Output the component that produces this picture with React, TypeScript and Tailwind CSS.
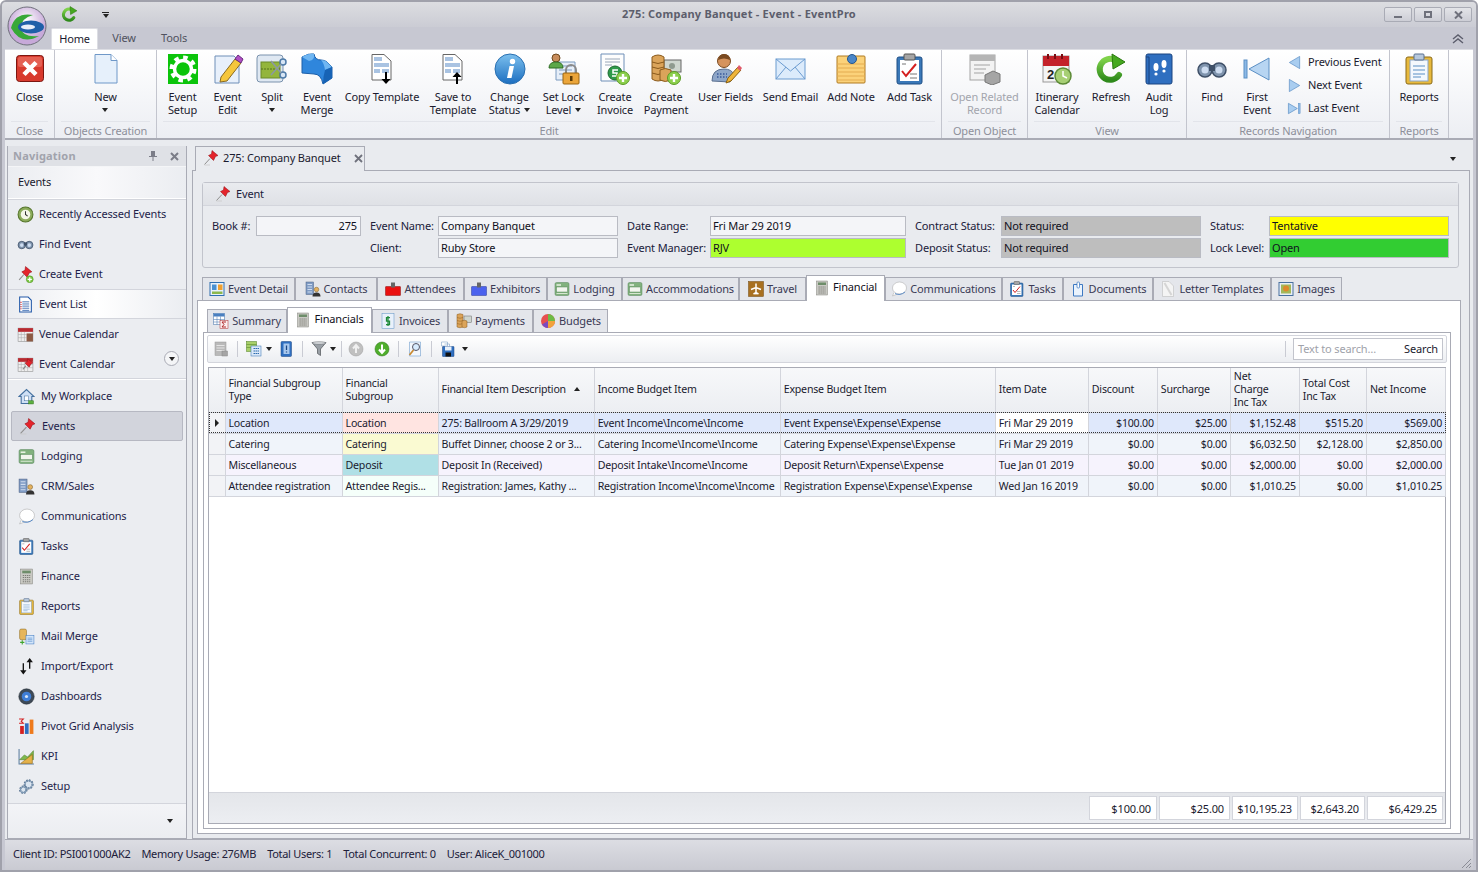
import type { ReactNode } from "react";

type IconName = keyof typeof ICONS;

const g = (d: string, fill: string, stroke = "none", sw = 1) => <path d={d} fill={fill} stroke={stroke} strokeWidth={sw} />;

// all drawn on a 32 unit box
const ICONS = {
  close: <>
    <rect x="2.5" y="2.5" width="27" height="26" rx="3" fill="#d83a2e" stroke="#7c1610" />
    <rect x="4" y="4" width="24" height="10" rx="2" fill="#ee7a6c" opacity=".6" />
    <path d="M10 9.5 L22 21.5 M22 9.5 L10 21.5" stroke="#fff" strokeWidth="4.5" />
  </>,
  newdoc: <>{g("M5 1.5 H21 L27 7.5 V30 H5 Z", "#e6f0fb", "#6f98c8")}{g("M21 1.5 V7.5 H27", "#fff", "#6f98c8")}</>,
  gear: <>
    <rect x="1" y="1" width="30" height="30" fill="#0bc40b" />
    <circle cx="16" cy="16" r="11.5" fill="none" stroke="#fff" strokeWidth="4" strokeDasharray="4.5 4.5" />
    <circle cx="16" cy="16" r="8.5" fill="none" stroke="#fff" strokeWidth="3.5" />
  </>,
  edit: <>
    {g("M3 3 H22 L27 8 V30 H3 Z", "#e8f0fb", "#6f8fb8")}
    {g("M9 24 L23 6 L29 10 L15 28 L8 29 Z", "#f5c63c", "#8a6a20")}
    {g("M23 6 L26 2 L31 6 L29 10 Z", "#b04fc4", "#6a2a80")}
  </>,
  split: <>
    <rect x="1" y="2" width="26" height="27" rx="3" fill="#dfe8f2" stroke="#7a92ad" />
    <rect x="5" y="9" width="19" height="16" fill="#93b53c" stroke="#6a8a28" />
    <path d="M5 16 H24" stroke="#55701c" strokeDasharray="2 1" />
    <circle cx="27" cy="9" r="3" fill="#d8e6f5" stroke="#4f7ba8" strokeWidth="1.5" />
    <circle cx="27" cy="22" r="3" fill="#d8e6f5" stroke="#4f7ba8" strokeWidth="1.5" />
    <path d="M15 8 L25 20 M15 22 L25 11" stroke="#8a97a5" strokeWidth="1.5" />
  </>,
  merge: <>
    {g("M1 4 Q8 0 13 1 Q14 7 20 7 Q24 7 26 9 L31 14 V25 L22 31 Q20 21 13 21 L1 20 Z", "#2f86dc", "#1c5ea8")}
    {g("M1 4 Q8 0 13 1 Q14 7 8 8 Z", "#6fb6f2")}
    {g("M20 7 Q24 7 26 9 L31 14 L24 17 Q23 10 20 7 Z", "#6fb6f2")}
    {g("M24 17 L31 14 V25 L22 31 Q22 24 24 17 Z", "#1763b5")}
  </>,
  tplDown: <>
    {g("M6 1.5 H18 L25 8 V27 H6 Z", "#fff", "#666")}
    <path d="M8 10 H23 V14 H8 Z M8 16 H14 V20 H8 Z M16 16 H23 V20 H16 Z M8 4 H16 V8 H8 Z" fill="#a9c3e2" />
    <path d="M20 19 V28" stroke="#000" strokeWidth="2" />{g("M15.5 26 H24.5 L20 31 Z", "#000")}
  </>,
  tplUp: <>
    {g("M6 1.5 H18 L25 8 V27 H6 Z", "#fff", "#666")}
    <path d="M8 10 H23 V14 H8 Z M8 16 H14 V20 H8 Z M16 16 H23 V20 H16 Z M8 4 H16 V8 H8 Z" fill="#a9c3e2" />
    <path d="M20 22 V31" stroke="#000" strokeWidth="2" />{g("M15.5 24 H24.5 L20 19 Z", "#000")}
  </>,
  info: <>
    <circle cx="16" cy="16" r="15" fill="url(#blueBall)" stroke="#2a6fb0" />
    <path d="M15.5 13 H20 L17.5 25 H13 Z" fill="#fff" />
    <circle cx="18.5" cy="8.5" r="2.7" fill="#fff" />
  </>,
  lock: <>
    {g("M8 9 H27 V27 H8 Z", "#e6eef8", "#7b9abf")}
    <path d="M11 13 H24 M11 17 H24 M11 21 H17" stroke="#7b9abf" />
    <circle cx="8" cy="5" r="4" fill="#c98d5c" stroke="#6f4a20" />
    {g("M1 15 Q1 9 8 9 Q15 9 15 15 Z", "#5ca84a", "#2f6e24")}
    <path d="M18 20 V17 A5 5 0 0 1 28 17 V20" fill="none" stroke="#8a8a8a" strokeWidth="2" />
    <rect x="15" y="20" width="16" height="11" rx="1" fill="#eba53a" stroke="#9a6410" />
    <rect x="22" y="23" width="2.5" height="5" fill="#5c3a05" />
  </>,
  invoice: <>
    {g("M2 1 H25 V28 H2 Z", "#fdfdfd", "#6f8fb8")}
    <path d="M6 6 H21 M6 9 H21 M6 12 H13" stroke="#9aa7b8" />
    <circle cx="16" cy="20" r="7" fill="#2f9a4a" stroke="#1c6a30" />
    <path d="M19 17 H14 V20 H18 V23 H13" fill="none" stroke="#fff" strokeWidth="1.5" />
    <circle cx="24" cy="25" r="6.5" fill="#8ccf4d" stroke="#5b9a25" />
    <path d="M24 21 V29 M20 25 H28" stroke="#fff" strokeWidth="2.4" />
  </>,
  payment: <>
    <rect x="14" y="7" width="17" height="12" fill="#cfd6cf" stroke="#666" />
    <circle cx="22" cy="13" r="3" fill="#8f9a8f" />
    <path d="M2 4 Q8 0 14 4 V26 Q8 30 2 26 Z" fill="#dba45a" stroke="#8a5a1c" />
    <path d="M2 9 Q8 12 14 9 M2 14 Q8 17 14 14 M2 20 Q8 23 14 20" fill="none" stroke="#8a5a1c" />
    <path d="M10 17 Q15 14 21 17 V27 Q15 30 10 27 Z" fill="#dba45a" stroke="#8a5a1c" />
    <circle cx="24" cy="25" r="6.5" fill="#8ccf4d" stroke="#5b9a25" />
    <path d="M24 21 V29 M20 25 H28" stroke="#fff" strokeWidth="2.4" />
  </>,
  user: <>
    <circle cx="14" cy="8" r="6.5" fill="#d5935d" stroke="#7a4a20" />
    {g("M8 7 Q9 1 14 1 Q20 1 20 7 Q14 4 8 7 Z", "#7a4a20")}
    {g("M2 28 Q2 16 14 16 Q22 16 24 22 L20 29 Z", "#8ea6c8", "#5a6f8f")}
    <path d="M7 21 H17 M7 24 H17" stroke="#3a5a9a" strokeWidth="1.5" strokeDasharray="1.5 1.5" />
    {g("M16 30 L18 25 L28 14 L31 17 L21 28 Z", "#efb53a", "#8a6010")}
    {g("M27 15 L29 12 L32 15 L30 18 Z", "#e05a6a")}
  </>,
  mail: <>
    <rect x="1" y="6" width="29" height="20" fill="#dcebfb" stroke="#6b9bd0" />
    <path d="M1 6 L15.5 18 L30 6 M1 26 L11 14 M30 26 L20 14" fill="none" stroke="#6b9bd0" />
  </>,
  note: <>
    <rect x="2" y="3" width="28" height="27" rx="1" fill="#fbd27a" stroke="#b07a20" />
    <path d="M2 11 H30 M2 15 H30 M2 19 H30 M2 23 H30 M2 27 H30" stroke="#e4ac50" />
    <circle cx="17" cy="6" r="4.5" fill="#4a86c8" stroke="#24568f" />
  </>,
  task: <>
    <rect x="3" y="4" width="25" height="27" rx="2" fill="#3a78b8" stroke="#1f4f85" />
    <rect x="6" y="7" width="19" height="21" fill="#fff" />
    <rect x="10" y="1" width="11" height="6" rx="1" fill="#a5a5a5" stroke="#555" />
    <path d="M8 18 L12 23 L22 11" fill="none" stroke="#d42020" strokeWidth="2" />
    <path d="M16 21 H23 M16 25 H23 M8 11 H12" stroke="#777" />
  </>,
  related: <>
    <rect x="1" y="2" width="25" height="25" fill="#f3f3f3" stroke="#a3a3a3" />
    <rect x="1" y="2" width="25" height="6" fill="#b5b5b5" />
    <path d="M5 12 H21 M5 16 H17 M5 20 H15" stroke="#a3a3a3" />
    {g("M16 22 L24 18 L31 21 V29 L23 32 L16 29 Z", "#a5a5a5", "#777")}
  </>,
  itin: <>
    <rect x="2" y="3" width="26" height="26" fill="#f4f4f4" stroke="#999" />
    <rect x="2" y="3" width="26" height="10" fill="#c4222a" />
    <path d="M7 1 V6 M14 1 V6 M21 1 V6" stroke="#7a0d12" strokeWidth="2" />
    <text x="6" y="26" fontSize="13" fontWeight="700" fontFamily="Liberation Sans" fill="#222">2</text>
    <circle cx="22" cy="23" r="8" fill="#a7cf75" stroke="#5c8a36" strokeWidth="1.5" />
    <path d="M22 18 V23 L26 25" fill="none" stroke="#fff" strokeWidth="1.5" />
  </>,
  refresh: <>
    <path d="M24 22 A10.5 10.5 0 1 1 20 7" fill="none" stroke="url(#greenArc)" strokeWidth="6" strokeLinecap="round" />
    {g("M17 1 L30 9 L18 16 Z", "#46a81f", "#2c7a10")}
  </>,
  audit: <>
    <rect x="3" y="1" width="26" height="30" rx="2" fill="#2f6fc0" stroke="#1a4480" />
    <path d="M3 4 H6 V31" stroke="#1a4480" fill="none" />
    <ellipse cx="13" cy="14" rx="2.5" ry="4" fill="#fff" />
    <ellipse cx="21" cy="11" rx="2.5" ry="4" fill="#fff" />
    <circle cx="13" cy="21" r="1.6" fill="#fff" /><circle cx="21" cy="18" r="1.6" fill="#fff" />
  </>,
  binoc: <>
    <circle cx="9" cy="17" r="7" fill="#7f94ad" stroke="#3f5068" strokeWidth="1.5" />
    <circle cx="23" cy="17" r="7" fill="#7f94ad" stroke="#3f5068" strokeWidth="1.5" />
    <circle cx="9" cy="17" r="3.5" fill="#cddcf0" /><circle cx="23" cy="17" r="3.5" fill="#cddcf0" />
    <rect x="13" y="12" width="6" height="6" fill="#3f5068" />
  </>,
  first: <>
    <rect x="3" y="7" width="3" height="18" fill="#8db9e6" stroke="#5b8fc4" />
    {g("M28 5 V27 L8 16 Z", "#b7d5f2", "#5b8fc4")}
  </>,
  prev: <>{g("M27 3 V29 L5 16 Z", "#a9cdf0", "#5b8fc4", 1.5)}</>,
  next: <>{g("M5 3 V29 L27 16 Z", "#a9cdf0", "#5b8fc4", 1.5)}</>,
  last: <>
    {g("M3 5 V27 L22 16 Z", "#a9cdf0", "#5b8fc4", 1.5)}
    <rect x="24" y="5" width="4" height="22" fill="#8db9e6" stroke="#5b8fc4" />
  </>,
  report: <>
    <rect x="3" y="4" width="26" height="27" rx="2" fill="#e8b93c" stroke="#8a6a18" />
    <rect x="7" y="7" width="18" height="21" fill="#f4f8fd" stroke="#8aa6c8" />
    <rect x="11" y="1" width="10" height="6" rx="1" fill="#b7c8dc" stroke="#5a7090" />
    <path d="M10 13 H22 M10 17 H22 M10 21 H22 M10 24 H18" stroke="#5b8fc4" />
  </>,
  clock: <>
    <circle cx="16" cy="16" r="14" fill="#8bab5a" stroke="#55752c" strokeWidth="2" />
    <circle cx="16" cy="16" r="9" fill="#f4f6e8" />
    <path d="M16 10 V16 L20 19" fill="none" stroke="#333" strokeWidth="2" />
  </>,
  pin: <>
    {g("M18 1 L30 11 L25 13 L21 21 L11 11 L17 8 Z", "#e4242c", "#8f1016")}
    <path d="M14 17 L3 29" stroke="#8f8f8f" strokeWidth="2" />
    <path d="M3 30 H14" stroke="#c9c9c9" strokeWidth="1.5" />
  </>,
  pinAdd: <>
    {g("M16 1 L28 11 L23 13 L19 21 L9 11 L15 8 Z", "#e4242c", "#8f1016")}
    <path d="M13 16 L4 26" stroke="#8f8f8f" strokeWidth="2" />
    <circle cx="24" cy="25" r="6.5" fill="#7cc944" stroke="#4f8f20" />
    <path d="M24 21 V29 M20 25 H28" stroke="#fff" strokeWidth="2.4" />
  </>,
  list: <>
    <path d="M5 2 H21 L27 8 V30 H5 Z" fill="#fff" stroke="#2258a8" strokeWidth="2" />
    <path d="M10 11 H23 M10 15 H23 M10 19 H23 M10 23 H23 M10 27 H23" stroke="#2258a8" strokeWidth="1.5" />
    <path d="M7.5 11 V27" stroke="#d42020" strokeWidth="2" strokeDasharray="2 2" />
  </>,
  venueCal: <>
    <rect x="2" y="4" width="28" height="25" fill="#eee" stroke="#888" />
    <rect x="2" y="4" width="28" height="7" fill="#b82a30" />
    <path d="M2 16 H18 M2 22 H18 M8 11 V29 M14 11 V29" stroke="#aaa" />
    <rect x="18" y="14" width="12" height="15" fill="#8c5a44" />
  </>,
  eventCal: <>
    <rect x="2" y="4" width="28" height="25" fill="#eee" stroke="#888" />
    <rect x="2" y="4" width="28" height="7" fill="#b82a30" />
    <path d="M2 16 H30 M2 22 H30 M8 11 V29 M14 11 V29 M20 11 V29" stroke="#aaa" />
    {g("M20 5 L30 13 L26 15 L23 21 L15 13 L19 11 Z", "#e4242c", "#8f1016")}
    <path d="M17 18 L11 25" stroke="#888" strokeWidth="2" />
  </>,
  home: <>
    {g("M2 16 L16 3 L30 16 L26 16 V29 H6 V16 Z", "#cfe0f5", "#44709f", 2)}
    <rect x="12" y="15" width="8" height="9" fill="#fff" stroke="#44709f" />
    <rect x="20" y="24" width="9" height="6" fill="#5cb040" stroke="#3a7a24" />
  </>,
  lodging: <>
    <rect x="2" y="3" width="28" height="26" rx="3" fill="#82b27e" stroke="#55855a" />
    <rect x="5" y="12" width="22" height="10" fill="#f2f6ee" stroke="#55855a" />
    <path d="M5 8 H14" stroke="#e9f2e4" strokeWidth="3" />
    <path d="M5 25 H27" stroke="#d6e6d0" strokeWidth="2" />
  </>,
  crm: <>
    <rect x="2" y="2" width="15" height="25" fill="#7f9bc4" stroke="#4a5f80" />
    <path d="M5 7 H14 M5 12 H14 M5 17 H14 M5 22 H14" stroke="#cfdcee" strokeWidth="2" />
    <circle cx="23" cy="17" r="4.5" fill="#e3b15f" stroke="#7a5a20" />
    {g("M15 31 Q15 23 23 23 Q31 23 31 31 Z", "#333")}
  </>,
  bubble: <>
    <ellipse cx="17" cy="14" rx="14" ry="12" fill="#fff" stroke="#a5a5a5" />
    <path d="M6 23 L3 30 L13 26" fill="#fff" stroke="#a5a5a5" />
    <path d="M8 25 Q18 30 28 22" fill="none" stroke="#3d79c2" strokeWidth="1.6" />
  </>,
  calc: <>
    <rect x="5" y="2" width="22" height="28" fill="#c9c9c3" stroke="#82827c" />
    <rect x="8" y="5" width="16" height="5" fill="#6e8d6a" />
    <path d="M9 14 H23 M9 18 H23 M9 22 H23 M9 26 H23" stroke="#7a7a74" strokeWidth="2" strokeDasharray="2.5 1.5" />
  </>,
  merge2: <>
    <rect x="3" y="2" width="13" height="20" rx="3" fill="#e6b65c" stroke="#8a6a20" />
    <rect x="15" y="14" width="15" height="16" fill="#d4e6fa" stroke="#3d79c2" />
    <path d="M18 19 H27 M18 22 H27 M18 25 H27" stroke="#3d79c2" />
    <path d="M4 27 H12 M8 23 V31" stroke="#3fa52f" strokeWidth="2" />
  </>,
  impexp: <>
    <path d="M10 10 V27 M22 3 V20" stroke="#111" strokeWidth="2.5" />
    {g("M4 23 H16 L10 31 Z", "#111")}{g("M16 8 H28 L22 0 Z", "#111")}
  </>,
  dash: <>
    <circle cx="16" cy="16" r="14.5" fill="#3e4a57" stroke="#20282f" />
    <circle cx="16" cy="16" r="9" fill="#3f7ed6" />
    <circle cx="16" cy="16" r="3" fill="#d7e6f8" />
  </>,
  pivot: <>
    <path d="M2 2 H10 L6 6 L10 10 H2" fill="none" stroke="#d42020" strokeWidth="2" />
    <rect x="4" y="15" width="7" height="15" fill="#d42020" />
    <rect x="13" y="10" width="7" height="20" fill="#2f6fc0" />
    <rect x="22" y="3" width="7" height="27" fill="#ee7a1c" />
  </>,
  kpi: <>
    <path d="M2 2 V30 H30" fill="none" stroke="#5f7f9f" strokeWidth="2" />
    {g("M3 22 L12 13 L18 17 L29 5 V22 Z", "#7eb84c", "#4a7a24")}
    {g("M5 29 L27 12 V29 Z", "#e5b24a", "#8a6010")}
  </>,
  setup: <>
    <circle cx="20" cy="12" r="7.5" fill="#dbe5f0" stroke="#56718f" strokeWidth="4" strokeDasharray="3 2" />
    <circle cx="20" cy="12" r="7" fill="none" stroke="#7f9ab5" strokeWidth="2" />
    <circle cx="10" cy="22" r="6" fill="#dbe5f0" stroke="#56718f" strokeWidth="4" strokeDasharray="3 2" />
    <circle cx="10" cy="22" r="5.5" fill="none" stroke="#7f9ab5" strokeWidth="2" />
  </>,
  summary: <>
    <rect x="1" y="1" width="22" height="22" fill="#fff" stroke="#3d6fa8" />
    <rect x="1" y="1" width="22" height="6" fill="#4a80c0" />
    <path d="M1 13 H23 M1 18 H23 M8 7 V23 M15 7 V23" stroke="#3d6fa8" />
    <rect x="14" y="15" width="16" height="16" fill="#fbeeee" stroke="#b02a2a" />
    <path d="M26 18 H18 L22 23 L18 28 H26" fill="none" stroke="#b02a2a" strokeWidth="2" />
  </>,
  invoiceTab: <>
    <rect x="4" y="1" width="24" height="30" fill="#e9f1fb" stroke="#5b8fc4" />
    <path d="M20 9 H13 V16 H19 V23 H12 M16 6 V26" fill="none" stroke="#1f8a3a" strokeWidth="2.5" />
  </>,
  coins: <>
    <rect x="16" y="6" width="15" height="13" fill="#cfd6cf" stroke="#666" />
    <path d="M2 3 Q8 0 14 3 V28 Q8 31 2 28 Z" fill="#dba45a" stroke="#8a5a1c" />
    <path d="M2 9 Q8 12 14 9 M2 15 Q8 18 14 15 M2 21 Q8 24 14 21" fill="none" stroke="#8a5a1c" />
    <path d="M12 16 Q17 13 22 16 V28 Q17 31 12 28 Z" fill="#dba45a" stroke="#8a5a1c" />
  </>,
  budgets: <>
    <circle cx="16" cy="16" r="14" fill="#e55050" />
    <path d="M16 16 L16 2 A14 14 0 0 1 30 16 Z" fill="#6dbb45" />
    <path d="M16 16 L30 16 A14 14 0 0 1 16 30 Z" fill="#f2a33a" />
    <path d="M16 16 L16 30 A14 14 0 0 1 4 23 Z" fill="#7a4bc0" />
  </>,
  detail: <>
    <rect x="2" y="3" width="28" height="26" fill="#e8f1fa" stroke="#2f6fb0" strokeWidth="2" />
    <rect x="6" y="7" width="9" height="11" fill="#4a90d0" />
    <rect x="18" y="7" width="9" height="11" fill="#f0a030" />
    <rect x="6" y="21" width="21" height="5" fill="#8cb84c" />
  </>,
  attendees: <>
    <rect x="1" y="11" width="30" height="18" rx="1" fill="#ea1010" stroke="#8a1010" />
    <rect x="12" y="3" width="8" height="10" fill="#666" />
  </>,
  exhibitors: <>
    <rect x="1" y="11" width="30" height="18" rx="1" fill="#4b62ee" stroke="#2a3a9a" />
    <rect x="12" y="3" width="8" height="10" fill="#666" />
  </>,
  travel: <>
    <rect x="1" y="1" width="30" height="30" fill="#a87020" stroke="#704810" />
    <path d="M16 5 V27 M6 17 L16 13 L26 17 M11 26 L16 23 L21 26" fill="none" stroke="#fff" strokeWidth="3" />
  </>,
  docs: <>
    {g("M7 7 H25 V30 H7 Z", "#eaf3fd", "#3d79c2", 2)}
    <rect x="14" y="2" width="5" height="12" rx="2" fill="#fff" stroke="#3d79c2" strokeWidth="1.5" />
  </>,
  letter: <>{g("M5 1 H18 L27 10 V31 H5 Z", "#f4f4f4", "#b5b5b5")}{g("M9 4 L23 28", "none", "#d5d5d5", 4)}</>,
  images: <>
    <rect x="2" y="3" width="28" height="26" fill="#e9eff7" stroke="#48709f" strokeWidth="2" />
    <rect x="6" y="7" width="20" height="18" fill="#a3b85a" />
    <circle cx="16" cy="15" r="6" fill="#dd8a2c" />
  </>,
  grid1: <>
    <rect x="4" y="2" width="22" height="27" fill="#b9b9b9" stroke="#999" />
    <path d="M7 9 H23 M7 14 H23 M7 19 H23" stroke="#e4e4e4" strokeWidth="2" />
    <rect x="18" y="20" width="11" height="10" fill="#a5a5a5" stroke="#888" />
  </>,
  columns: <>
    <rect x="1" y="1" width="20" height="20" fill="#a8cf68" stroke="#4f7f20" />
    <path d="M1 7 H21 M1 13 H21" stroke="#4f7f20" />
    <rect x="10" y="10" width="20" height="20" fill="#dbe8f8" stroke="#2f6fb0" />
    <path d="M15 15 H26 M15 20 H26 M15 25 H26" stroke="#2f6fb0" strokeWidth="2" strokeDasharray="3 1" />
  </>,
  bookmark: <>
    <rect x="6" y="1" width="21" height="30" rx="2" fill="#2f6fc0" stroke="#1a4480" />
    <rect x="11" y="5" width="12" height="21" fill="#a8c8ee" />
    <path d="M17 9 V18 M17 21 V23" stroke="#1a4480" strokeWidth="2.5" />
  </>,
  funnel: <>
    {g("M2 3 H30 L19 16 V29 L13 25 V16 Z", "#9aa0a6", "#55595e", 1.5)}
    <ellipse cx="16" cy="4" rx="14" ry="2.5" fill="#dfe2e5" stroke="#55595e" />
  </>,
  up: <>
    <circle cx="16" cy="16" r="14" fill="#c0c0c0" stroke="#9a9a9a" />
    <path d="M16 24 V10 M10 15 L16 8 L22 15" fill="none" stroke="#f0f0f0" strokeWidth="4" />
  </>,
  down: <>
    <circle cx="16" cy="16" r="14" fill="#4fae2c" stroke="#2a6f14" />
    <path d="M16 7 V22 M10 17 L16 24 L22 17" fill="none" stroke="#fff" strokeWidth="4" />
  </>,
  preview: <>
    {g("M5 2 H27 V30 H5 Z", "#f2f7fd", "#5b8fc4")}
    <circle cx="18" cy="12" r="7" fill="#d8ecff" stroke="#556" strokeWidth="2" />
    <path d="M13 18 L5 28" stroke="#c98a30" strokeWidth="3.5" />
  </>,
  save: <>
    <path d="M3 2 H15 V10 H3 Z M9 6 H19 V14" fill="#fff" stroke="#6a90bd" />
    <rect x="5" y="11" width="23" height="20" rx="1" fill="#2f6fc0" stroke="#1a4480" />
    <rect x="10" y="11" width="13" height="8" fill="#e8f0fa" />
    <rect x="11" y="23" width="11" height="8" fill="#111" />
  </>,
};

function Icon({ name, size = 32 }: { name: IconName; size?: number }) {
  return (
    <svg width={size} height={size} viewBox="0 0 32 32" className="shrink-0">
      {ICONS[name]}
    </svg>
  );
}

const Caret = ({ className = "" }: { className?: string }) => (
  <span className={`inline-block w-0 h-0 border-l-[3.5px] border-r-[3.5px] border-t-[4px] border-l-transparent border-r-transparent border-t-[#222] ${className}`} />
);

type RibbonBtn = { lines: string[]; icon: IconName; w: number; caret?: "below" | "inline"; disabled?: boolean };

const EDIT_BUTTONS: RibbonBtn[] = [
  { lines: ["Event", "Setup"], icon: "gear", w: 46 },
  { lines: ["Event", "Edit"], icon: "edit", w: 44 },
  { lines: ["Split"], icon: "split", w: 45, caret: "below" },
  { lines: ["Event", "Merge"], icon: "merge", w: 45 },
  { lines: ["Copy Template"], icon: "tplDown", w: 85 },
  { lines: ["Save to", "Template"], icon: "tplUp", w: 57 },
  { lines: ["Change", "Status"], icon: "info", w: 56, caret: "inline" },
  { lines: ["Set Lock", "Level"], icon: "lock", w: 52, caret: "inline" },
  { lines: ["Create", "Invoice"], icon: "invoice", w: 51 },
  { lines: ["Create", "Payment"], icon: "payment", w: 51 },
  { lines: ["User Fields"], icon: "user", w: 68 },
  { lines: ["Send Email"], icon: "mail", w: 62 },
  { lines: ["Add Note"], icon: "note", w: 59 },
  { lines: ["Add Task"], icon: "task", w: 58 },
];

function RibbonButton({ b }: { b: RibbonBtn }) {
  return (
    <div className="flex flex-col items-center shrink-0" style={{ width: b.w }}>
      <div className="h-[32px] mt-[3px] mb-[5px] flex items-center justify-center"><Icon name={b.icon} /></div>
      <div className={`text-center leading-[13px] whitespace-nowrap ${b.disabled ? "text-[#a3a5ad]" : "text-[#1a1a2e]"}`}>
        {b.lines.map((l, i) => (
          <div key={l}>
            {l}
            {b.caret === "inline" && i === 1 && <Caret className="ml-[4px] mb-[2px]" />}
          </div>
        ))}
        {b.caret === "below" && <div className="leading-[10px]"><Caret /></div>}
      </div>
    </div>
  );
}

function RibbonGroup({ caption, width, inner = "justify-center", children }: { caption: string; width: number; inner?: string; children: ReactNode }) {
  return (
    <div className="flex flex-col shrink-0 border-r border-[#c3c5ce] h-full" style={{ width }}>
      <div className={`h-[71px] shrink-0 flex ${inner}`}>{children}</div>
      <div className="mx-[6px] h-[17px] shrink-0 border-t border-[#e2e4ea] text-center text-[#8d8f9a] leading-[18px]">{caption}</div>
    </div>
  );
}

function Ribbon() {
  return (
    <div className="h-[91px] mx-[3px] flex bg-gradient-to-b from-white to-[#eceef3] border-b-2 border-[#a9abb5] border-t border-t-[#dcdde3] text-[#1a1a2e]">
      <RibbonGroup caption="Close" width={50}>
        <RibbonButton b={{ lines: ["Close"], icon: "close", w: 46 }} />
      </RibbonGroup>
      <RibbonGroup caption="Objects Creation" width={102}>
        <RibbonButton b={{ lines: ["New"], icon: "newdoc", w: 100, caret: "below" }} />
      </RibbonGroup>
      <RibbonGroup caption="Edit" width={785}>
        {EDIT_BUTTONS.map((b) => <RibbonButton key={b.lines.join(" ")} b={b} />)}
      </RibbonGroup>
      <RibbonGroup caption="Open Object" width={86}>
        <RibbonButton b={{ lines: ["Open Related", "Record"], icon: "related", w: 82, disabled: true }} />
      </RibbonGroup>
      <RibbonGroup caption="View" width={159} inner="justify-start">
        <RibbonButton b={{ lines: ["Itinerary", "Calendar"], icon: "itin", w: 58 }} />
        <RibbonButton b={{ lines: ["Refresh"], icon: "refresh", w: 50 }} />
        <RibbonButton b={{ lines: ["Audit", "Log"], icon: "audit", w: 46 }} />
      </RibbonGroup>
      <RibbonGroup caption="Records Navigation" width={203} inner="justify-start pl-[2px]">
        <RibbonButton b={{ lines: ["Find"], icon: "binoc", w: 46 }} />
        <RibbonButton b={{ lines: ["First", "Event"], icon: "first", w: 44 }} />
        <div className="flex flex-col gap-[7px] pt-[4px] pl-[8px] w-[104px] shrink-0">
          {([["prev", "Previous Event"], ["next", "Next Event"], ["last", "Last Event"]] as [IconName, string][]).map(([ic, t]) => (
            <div key={t} className="flex items-center gap-[6px] h-[16px]"><Icon name={ic} size={15} /><span className="whitespace-nowrap">{t}</span></div>
          ))}
        </div>
      </RibbonGroup>
      <RibbonGroup caption="Reports" width={59}>
        <RibbonButton b={{ lines: ["Reports"], icon: "report", w: 56 }} />
      </RibbonGroup>
    </div>
  );
}

const NAV_TOP: [IconName, string][] = [
  ["clock", "Recently Accessed Events"],
  ["binoc", "Find Event"],
  ["pinAdd", "Create Event"],
  ["list", "Event List"],
  ["venueCal", "Venue Calendar"],
  ["eventCal", "Event Calendar"],
];

const NAV_MAIN: [IconName, string][] = [
  ["home", "My Workplace"],
  ["pin", "Events"],
  ["lodging", "Lodging"],
  ["crm", "CRM/Sales"],
  ["bubble", "Communications"],
  ["task", "Tasks"],
  ["calc", "Finance"],
  ["report", "Reports"],
  ["merge2", "Mail Merge"],
  ["impexp", "Import/Export"],
  ["dash", "Dashboards"],
  ["pivot", "Pivot Grid Analysis"],
  ["kpi", "KPI"],
  ["setup", "Setup"],
];

function Sidebar() {
  return (
    <div className="w-[180px] shrink-0 flex flex-col border border-[#a9abb5] border-t-0 bg-[#ebedf1] text-[#1e1e4a]">
      <div className="h-[21px] flex items-center justify-between pl-[5px] pr-[7px] bg-[#dfe1e6] border-b border-[#f4f5f7]">
        <span className="font-bold text-[#a1a3ac] tracking-[0.2px]">Navigation</span>
        <span className="flex items-center gap-[13px] text-[#7b7d88]">
          <svg width="8" height="10" viewBox="0 0 8 10"><path d="M2 0 H6 V5 H8 V6 H4.5 V10 H3.5 V6 H0 V5 H2 Z" fill="#7b7d88" /></svg>
          <svg width="9" height="9" viewBox="0 0 9 9"><path d="M1 1 L8 8 M8 1 L1 8" stroke="#7b7d88" strokeWidth="2" /></svg>
        </span>
      </div>
      <div className="h-[32px] flex items-center pl-[10px] bg-gradient-to-r from-[#ebedf1] via-[#f9f9fb] to-[#ebedf1] border-b border-b-white shadow-[0_1px_0_#d3d5dc] text-[#1a1a2e]">Events</div>
      <div className="flex flex-col">
        {NAV_TOP.map(([ic, t]) => (
          <div key={t} className={`h-[30px] flex items-center gap-[5px] pl-[9px] relative ${t === "Event List" ? "bg-gradient-to-r from-[#ebedf1] via-white to-[#ebedf1] border-y border-[#d3d5dc]" : ""}`}>
            <Icon name={ic} size={17} />
            <span>{t}</span>
            {t === "Event Calendar" && (
              <span className="absolute right-[7px] top-[2px] w-[15px] h-[15px] rounded-full border border-[#a9abb5] bg-[#f4f5f7] flex items-center justify-center"><Caret className="border-t-[#8a8c96]" /></span>
            )}
          </div>
        ))}
      </div>
      <div className="h-[2px] mt-[-1px] border-t border-[#d3d5dc] bg-white" />
      <div className="flex flex-col pt-[1px]">
        {NAV_MAIN.map(([ic, t]) => (
          <div key={t} className={`h-[30px] mx-[3px] flex items-center gap-[6px] pl-[7px] rounded-[2px] ${t === "Events" ? "bg-[#d2d4dc] border border-[#b6b8c2]" : ""}`}>
            <Icon name={ic} size={17} />
            <span>{t}</span>
          </div>
        ))}
      </div>
      <div className="flex-1 mt-[2px] border-t border-[#d3d5dc] bg-gradient-to-b from-[#f3f4f7] to-[#ebedf1] flex items-center justify-end pr-[13px]">
        <Caret className="border-t-[#8a8c96]" />
      </div>
    </div>
  );
}

function Field({ value, right, bg = "bg-[#f4f5f8]" }: { value: string; right?: boolean; bg?: string }) {
  return (
    <div className={`h-[20px] leading-[18px] border border-[#b9bbc3] px-[2px] text-[#101020] whitespace-nowrap ${bg} ${right ? "text-right pr-[3px]" : ""}`}>{value}</div>
  );
}

const Lbl = ({ t }: { t: string }) => <div className="h-[20px] leading-[20px] whitespace-nowrap text-[#20203a]">{t}</div>;

function EventPanel() {
  return (
    <div className="ml-[9px] mr-[10px] mt-[11px] h-[86px] border border-[#c2c4cc] rounded-[3px] flex flex-col bg-[#e9ebef]">
      <div className="h-[23px] flex items-center gap-[5px] pl-[12px] bg-gradient-to-b from-[#e9ebef] to-[#dfe1e6] border-b border-[#d3d5dc] text-[#20203a]">
        <Icon name="pin" size={16} />
        <span>Event</span>
      </div>
      <div className="pl-[9px] pt-[10px] grid grid-cols-[44px_105px_9px_68px_180px_9px_83px_196px_9px_86px_200px_9px_59px_180px] grid-rows-[20px_20px] gap-y-[2px]">
        <Lbl t="Book #:" /><Field value="275" right /><div />
        <Lbl t="Event Name:" /><Field value="Company Banquet" /><div />
        <Lbl t="Date Range:" /><Field value="Fri Mar 29 2019" /><div />
        <Lbl t="Contract Status:" /><Field value="Not required" bg="bg-[#bebebe]" /><div />
        <Lbl t="Status:" /><Field value="Tentative" bg="bg-[#ffff00]" />
        <div /><div /><div />
        <Lbl t="Client:" /><Field value="Ruby Store" /><div />
        <Lbl t="Event Manager:" /><Field value="RJV" bg="bg-[#adff2f]" /><div />
        <Lbl t="Deposit Status:" /><Field value="Not required" bg="bg-[#bebebe]" /><div />
        <Lbl t="Lock Level:" /><Field value="Open" bg="bg-[#32cd32]" />
      </div>
    </div>
  );
}

const MAIN_TABS: { t: string; ic: IconName; w: number; active?: boolean }[] = [
  { t: "Event Detail", ic: "detail", w: 93 },
  { t: "Contacts", ic: "crm", w: 82 },
  { t: "Attendees", ic: "attendees", w: 87 },
  { t: "Exhibitors", ic: "exhibitors", w: 83 },
  { t: "Lodging", ic: "lodging", w: 75 },
  { t: "Accommodations", ic: "lodging", w: 117 },
  { t: "Travel", ic: "travel", w: 67 },
  { t: "Financial", ic: "calc", w: 79, active: true },
  { t: "Communications", ic: "bubble", w: 117 },
  { t: "Tasks", ic: "task", w: 61 },
  { t: "Documents", ic: "docs", w: 90 },
  { t: "Letter Templates", ic: "letter", w: 118 },
  { t: "Images", ic: "images", w: 71 },
];

const SUB_TABS: { t: string; ic: IconName; w: number; active?: boolean }[] = [
  { t: "Summary", ic: "summary", w: 80 },
  { t: "Financials", ic: "calc", w: 85, active: true },
  { t: "Invoices", ic: "invoiceTab", w: 76 },
  { t: "Payments", ic: "coins", w: 85 },
  { t: "Budgets", ic: "budgets", w: 75 },
];

function TabStrip({ tabs, height }: { tabs: typeof MAIN_TABS; height: number }) {
  return (
    <div className="flex items-end relative z-10" style={{ height }}>
      {tabs.map((tab) => (
        <div
          key={tab.t}
          style={{ width: tab.w }}
          className={`flex items-center justify-center gap-[3px] whitespace-nowrap border border-b-0 border-[#a9abb5] shrink-0 ${tab.active ? "h-[26px] bg-white text-[#101020] mb-[-1px] pb-[2px]" : "h-[23px] bg-[#e4e6eb] text-[#3a3a55]"}`}
        >
          <Icon name={tab.ic} size={16} />
          <span>{tab.t}</span>
        </div>
      ))}
    </div>
  );
}

function Toolbar() {
  const Sep = () => <span className="w-px h-[16px] bg-[#c9cbd3] mx-[8px]" />;
  return (
    <div className="mx-[3px] mt-[2px] h-[28px] shrink-0 rounded-[2px] border border-[#d3d5dc] bg-gradient-to-b from-white to-[#eceef2] flex items-center pl-[5px] pr-[3px]">
      <Icon name="grid1" size={16} />
      <Sep />
      <Icon name="columns" size={16} />
      <Caret className="ml-[4px] mr-[6px]" />
      <Icon name="bookmark" size={16} />
      <Sep />
      <Icon name="funnel" size={16} />
      <Caret className="ml-[3px]" />
      <span className="w-px h-[16px] bg-[#c9cbd3] ml-[5px] mr-[6px]" />
      <Icon name="up" size={16} />
      <span className="w-[10px]" />
      <Icon name="down" size={16} />
      <Sep />
      <Icon name="preview" size={16} />
      <Sep />
      <Icon name="save" size={16} />
      <Caret className="ml-[6px]" />
      <div className="flex-1" />
      <span className="w-px h-[16px] bg-[#c9cbd3] mr-[7px]" />
      <div className="w-[150px] h-[22px] border border-[#c2c4cc] bg-white flex items-center justify-between px-[4px]">
        <span className="text-[#a0a2aa]">Text to search…</span>
        <span className="text-[#1a1a2e]">Search</span>
      </div>
    </div>
  );
}

const COLS = [16, 117, 96, 156, 186, 215, 93, 69, 73, 69, 67, 79];

const HEAD: { lines: string[]; sort?: boolean }[] = [
  { lines: ["Financial Subgroup", "Type"] },
  { lines: ["Financial", "Subgroup"] },
  { lines: ["Financial Item Description"], sort: true },
  { lines: ["Income Budget Item"] },
  { lines: ["Expense Budget Item"] },
  { lines: ["Item Date"] },
  { lines: ["Discount"] },
  { lines: ["Surcharge"] },
  { lines: ["Net", "Charge", "Inc Tax"] },
  { lines: ["Total Cost", "Inc Tax"] },
  { lines: ["Net Income"] },
];

const ROWS = [
  { bg: "bg-[#dfe8fb]", subBg: "bg-[#ffe4e1]", cells: ["Location", "Location", "275: Ballroom A 3/29/2019", "Event Income\\Income\\Income", "Event Expense\\Expense\\Expense", "Fri Mar 29 2019", "$100.00", "$25.00", "$1,152.48", "$515.20", "$569.00"] },
  { bg: "bg-[#f0f4fa]", subBg: "bg-[#fafad2]", cells: ["Catering", "Catering", "Buffet Dinner, choose 2 or 3...", "Catering Income\\Income\\Income", "Catering Expense\\Expense\\Expense", "Fri Mar 29 2019", "$0.00", "$0.00", "$6,032.50", "$2,128.00", "$2,850.00"] },
  { bg: "bg-[#f6f3fd]", subBg: "bg-[#b0e0e6]", cells: ["Miscellaneous", "Deposit", "Deposit In (Received)", "Deposit Intake\\Income\\Income", "Deposit Return\\Expense\\Expense", "Tue Jan 01 2019", "$0.00", "$0.00", "$2,000.00", "$0.00", "$2,000.00"] },
  { bg: "bg-[#f0f4fa]", subBg: "bg-[#f5fffa]", cells: ["Attendee registration", "Attendee Regis...", "Registration: James, Kathy ...", "Registration Income\\Income\\Income", "Registration Expense\\Expense\\Expense", "Wed Jan 16 2019", "$0.00", "$0.00", "$1,010.25", "$0.00", "$1,010.25"] },
];

const FOOTER: [string, number][] = [["$100.00", 68], ["$25.00", 71], ["$10,195.23", 66], ["$2,643.20", 65], ["$6,429.25", 76]];

function FinancialGrid() {
  return (
    <div className="ml-[4px] mr-[4px] mt-[4px] flex-1 flex flex-col border border-[#a9abb5] bg-white min-h-0 text-[#1a1a2e]">
      <div className="flex-1 min-h-0">
        <table className="table-fixed border-collapse w-[1237px] text-[10.6px] tracking-[-0.2px]">
          <colgroup>{COLS.map((w, i) => <col key={i} style={{ width: w }} />)}</colgroup>
          <thead>
            <tr className="h-[44px] bg-gradient-to-b from-[#f7f8fa] to-[#eceef2]">
              <th className="border border-t-0 border-l-0 border-[#d3d5dc]" />
              {HEAD.map((h) => (
                <th key={h.lines[0]} className="border border-t-0 border-[#d3d5dc] font-normal text-left px-[3px] leading-[13px] whitespace-nowrap">
                  {h.lines.map((l) => (
                    <div key={l}>
                      {l}
                      {h.sort && <span className="inline-block ml-[8px] mb-[2px] w-0 h-0 border-x-[3.5px] border-b-[4px] border-x-transparent border-b-[#222]" />}
                    </div>
                  ))}
                </th>
              ))}
            </tr>
          </thead>
          <tbody>
            {ROWS.map((r, ri) => (
              <tr key={ri} className={`h-[21px] ${r.bg} ${ri === 0 ? "outline-1 outline-dotted outline-[#333] -outline-offset-1" : ""}`}>
                <td className="border border-l-0 border-[#d3d5dc] bg-[#f2f3f6] align-middle">
                  {ri === 0 && <span className="block ml-[6px] w-0 h-0 border-y-[4px] border-l-[4px] border-y-transparent border-l-[#222]" />}
                </td>
                {r.cells.map((c, i) => (
                  <td
                    key={i}
                    className={`border border-[#d3d5dc] px-[3px] leading-[20px] whitespace-nowrap overflow-hidden ${i >= 6 ? "text-right" : ""} ${i === 1 ? r.subBg : ""} ${ri === 0 && i === 5 ? "bg-white" : ""}`}
                  >
                    {c}
                  </td>
                ))}
              </tr>
            ))}
          </tbody>
        </table>
      </div>
      <div className="h-[31px] shrink-0 border-t border-[#d3d5dc] bg-gradient-to-b from-[#e4e6ea] to-[#eceef2] flex items-center justify-end gap-[2px] pr-[2px]">
        {FOOTER.map(([v, w]) => (
          <div key={v} style={{ width: w }} className="h-[24px] leading-[23px] bg-white border border-[#d3d5dc] text-right pr-[5px]">{v}</div>
        ))}
      </div>
    </div>
  );
}

function DocumentPane() {
  return (
    <div className="flex-1 min-w-0 flex flex-col">
      <div className="h-[25px] flex items-end justify-between pr-[14px] border-b border-[#a9abb5] relative">
        <div className="ml-[3px] w-[170px] h-[25px] mb-[-1px] pb-[2px] bg-[#e9ebef] border border-b-0 border-[#a9abb5] flex items-center gap-[4px] pl-[7px] text-[#1a1a2e]">
          <Icon name="pin" size={16} />
          <span className="whitespace-nowrap">275: Company Banquet</span>
          <svg className="ml-[9px] shrink-0" width="9" height="9" viewBox="0 0 9 9"><path d="M1 1 L8 8 M8 1 L1 8" stroke="#6f717c" strokeWidth="1.8" /></svg>
        </div>
        <Caret className="border-t-[#7b7d88] mb-[9px]" />
      </div>
      <div className="flex-1 min-h-0 border border-t-0 border-[#a9abb5] flex flex-col bg-[#e9ebef]">
        <EventPanel />
        <div className="ml-[9px] mt-[6px]"><TabStrip tabs={MAIN_TABS} height={26} /></div>
        <div className="ml-[4px] mr-[8px] mb-[4px] flex-1 min-h-0 border border-[#a9abb5] bg-white flex flex-col pl-[5px] pr-[9px] pt-[5px] pb-[4px]">
          <div className="ml-[4px]"><TabStrip tabs={SUB_TABS} height={26} /></div>
          <div className="flex-1 min-h-0 border border-[#a9abb5] bg-white flex flex-col pb-[4px]">
            <Toolbar />
            <FinancialGrid />
          </div>
        </div>
      </div>
    </div>
  );
}

export default function App() {
  return (
    <div className="w-[1478px] h-[872px] overflow-hidden bg-[#c7c8d2] font-['Noto_Sans','Liberation_Sans',sans-serif] text-[11px] tracking-[-0.15px] flex flex-col rounded-t-[6px] border-2 border-[#a0a1ab] relative antialiased">
      {/* application orb */}
      <svg className="absolute left-[5px] top-[4px]" width="40" height="40" viewBox="0 0 40 40">
        <circle cx="20" cy="20" r="19" fill="url(#orb)" stroke="#6e6f7a" />
        <path d="M4 22 Q8 6 26 9 Q14 12 14 22 Q16 32 32 30 Q14 40 4 22 Z" fill="#38a838" />
        <ellipse cx="24" cy="21" rx="13" ry="6.5" fill="#1f5fa8" />
        <ellipse cx="21" cy="21" rx="7" ry="2.5" fill="#e8eef8" />
      </svg>
      <svg className="absolute w-0 h-0">
        <defs>
          <radialGradient id="orb" cx="50%" cy="35%"><stop offset="0" stopColor="#fff" /><stop offset="1" stopColor="#c7a9d9" /></radialGradient>
          <linearGradient id="blueBall" x1="0" y1="0" x2="0" y2="1"><stop offset="0" stopColor="#7cc0ee" /><stop offset="1" stopColor="#1c6ec0" /></linearGradient>
          <linearGradient id="greenArc" x1="0" y1="0" x2="0" y2="1"><stop offset="0" stopColor="#7fd24a" /><stop offset="1" stopColor="#2f8a1c" /></linearGradient>
        </defs>
      </svg>

      {/* title bar */}
      <div className="h-[25px] shrink-0 flex items-center bg-gradient-to-b from-[#dcdde1] to-[#cbccd4]">
        <div className="w-[200px] pl-[59px] flex items-center gap-[24px]">
          <Icon name="refresh" size={17} />
          <span className="flex flex-col items-center gap-[1px]"><span className="w-[7px] h-px bg-[#222]" /><Caret /></span>
        </div>
        <div className="flex-1 text-center font-bold text-[#5c5e6c] pr-[108px] tracking-[0.24px]">275: Company Banquet - Event - EventPro</div>
        <div className="w-[91px] mr-[1px] flex gap-[2px]">
          {["min", "max", "close"].map((k) => (
            <span key={k} className="w-[28px] h-[15px] rounded-[2px] border border-[#a9abb5] bg-gradient-to-b from-[#e3e4e8] to-[#cdced6] flex items-center justify-center">
              {k === "min" && <span className="w-[8px] h-[2px] mt-[5px] bg-[#6f717c]" />}
              {k === "max" && <span className="w-[8px] h-[7px] border-2 border-[#6f717c]" />}
              {k === "close" && <svg width="9" height="8" viewBox="0 0 9 8"><path d="M1 0.5 L8 7.5 M8 0.5 L1 7.5" stroke="#6f717c" strokeWidth="2" /></svg>}
            </span>
          ))}
        </div>
      </div>

      {/* ribbon page tabs */}
      <div className="h-[22px] shrink-0 flex items-end pl-[49px] pr-[12px] text-[#50525f] bg-[#c7c8d2]">
        <div className="w-[47px] h-[21px] bg-white rounded-t-[2px] border border-b-0 border-[#dcdde3] text-[#1a1a2e] flex items-center justify-center">Home</div>
        <div className="w-[50px] h-[21px] flex items-center justify-center ml-[1px]">View</div>
        <div className="w-[50px] h-[21px] flex items-center justify-center">Tools</div>
        <div className="flex-1" />
        <svg className="mb-[5px]" width="12" height="10" viewBox="0 0 12 10"><path d="M1 5 L6 1 L11 5 M1 9 L6 5 L11 9" fill="none" stroke="#5c5e6c" strokeWidth="1.4" /></svg>
      </div>

      <Ribbon />

      {/* body */}
      <div className="flex-1 min-h-0 mx-[3px] flex flex-col bg-[#e9ebef]">
        <div className="flex-1 min-h-0 flex pl-[2px] pr-[3px] pt-[6px] gap-[5px]">
          <Sidebar />
          <DocumentPane />
        </div>
        <div className="h-[31px] shrink-0 border-t border-[#a9abb5] bg-gradient-to-b from-[#dcdde3] to-[#c9cad2] flex items-center gap-[11px] pl-[8px] pb-[2px] text-[#20203a] tracking-[-0.3px] relative">
          <span>Client ID: PSI001000AK2</span>
          <span>Memory Usage: 276MB</span>
          <span>Total Users: 1</span>
          <span>Total Concurrent: 0</span>
          <span>User: AliceK_001000</span>
          <svg className="absolute right-[1px] bottom-[1px]" width="12" height="12" viewBox="0 0 12 12"><path d="M11 2 L2 11 M11 6 L6 11 M11 9 L9 11" stroke="#8a8c96" /></svg>
        </div>
      </div>
    </div>
  );
}
